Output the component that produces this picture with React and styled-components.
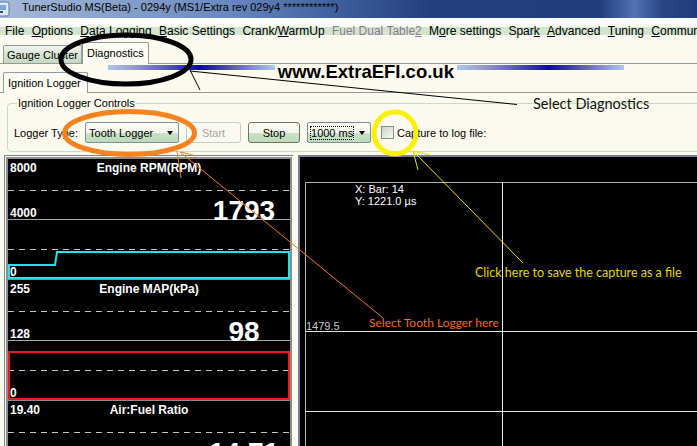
import React from 'react'
import styled, { createGlobalStyle } from 'styled-components'

const GlobalStyle = createGlobalStyle`
  html, body {
    margin: 0;
    padding: 0;
  }
  body {
    width: 697px;
    height: 446px;
    overflow: hidden;
    background: #fcf9ee;
    font-family: "Liberation Sans", Arial, sans-serif;
  }
`

const menus = [
    { label: 'File', key: -1 },
    { label: 'Options', key: 0 },
    { label: 'Data Logging', key: 0 },
    { label: 'Basic Settings', key: 0 },
    { label: 'Crank/WarmUp', key: 6 },
    { label: 'Fuel Dual Table2', key: 15, disabled: true },
    { label: 'More settings', key: 1 },
    { label: 'Spark', key: 4 },
    { label: 'Advanced', key: 0 },
    { label: 'Tuning', key: 0 },
    { label: 'Communications', key: 0 },
]

const gauges = [
    { title: 'Engine RPM(RPM)', max: '8000', mid: '4000', min: '0', value: '1793', trace: 'rpm' },
    { title: 'Engine MAP(kPa)', max: '255', mid: '128', min: '0', value: '98', trace: 'map' },
    { title: 'Air:Fuel Ratio', max: '19.40', mid: '', min: '', value: '14.71', trace: null },
]

const Mnemonic = ({ label, index }) => {
    if (index < 0) return label
    return (
        <>
            {label.slice(0, index)}
            <u>{label[index]}</u>
            {label.slice(index + 1)}
        </>
    )
}

const GaugeChart = ({ trace }) => (
    <GaugeSvg width="282" height="120">
        <line x1="0" y1="31.5" x2="282" y2="31.5" stroke="#c4c4c4" strokeDasharray="6 5" />
        <line x1="0" y1="60.5" x2="282" y2="60.5" stroke="#a8a8a8" />
        <line x1="0" y1="90.5" x2="282" y2="90.5" stroke="#c4c4c4" strokeDasharray="6 5" />
        {trace === 'rpm' && (
            <path d="M1 119 V106 H47 L49 93 H281 V119 Z" fill="none" stroke="#22e2ee" strokeWidth="2" />
        )}
        {trace === 'map' && (
            <rect x="1" y="72" width="280" height="47" fill="none" stroke="#ff1414" strokeWidth="2" />
        )}
    </GaugeSvg>
)

const App = () => {
    return (
        <Page>
            <GlobalStyle />
            <TitleBar>
                <AppIcon width="10" height="16" viewBox="0 0 10 16">
                    <rect x="-6" y="1" width="15" height="14" rx="2" fill="#dce8f6" stroke="#5a78a8" />
                    <rect x="-3" y="4" width="9" height="5" fill="#7fa6d8" />
                    <rect x="-3" y="10" width="6" height="2" fill="#2d4f86" />
                </AppIcon>
                TunerStudio MS(Beta) - 0294y (MS1/Extra rev 029y4 ************)
            </TitleBar>

            <MenuBar>
                {menus.map((m) => (
                    <MenuItem key={m.label} $disabled={m.disabled}>
                        <Mnemonic label={m.label} index={m.key} />
                    </MenuItem>
                ))}
            </MenuBar>

            <TabStrip>
                <Tab>Gauge Cluster</Tab>
                <Tab $active>Diagnostics</Tab>
            </TabStrip>

            <TabBody>
                <HeaderRow>
                    <SubTab>Ignition Logger</SubTab>
                    <Banner>
                        <GradBar />
                        <BannerText>www.ExtraEFI.co.uk</BannerText>
                        <GradBar />
                    </Banner>
                </HeaderRow>

                <SubBody>
                    <GroupBox>
                        <GroupLegend>Ignition Logger Controls</GroupLegend>
                        <ControlRow>
                            <FieldLabel>Logger Type:</FieldLabel>
                            <Combo $w={94}>
                                <ComboText>Tooth Logger</ComboText>
                                <Arrow />
                            </Combo>
                            <Button $w={55} disabled>Start</Button>
                            <Button $w={52}>Stop</Button>
                            <Combo $w={64}>
                                <ComboText $focus>1000 ms</ComboText>
                                <Arrow />
                            </Combo>
                            <CheckBox />
                            <FieldLabel $tight>Capture to log file:</FieldLabel>
                        </ControlRow>
                    </GroupBox>

                    <Main>
                        <LeftFrame>
                            <GaugeStack>
                                {gauges.map((g) => (
                                    <Gauge key={g.title}>
                                        <GaugeChart trace={g.trace} />
                                        <ScaleLabel $top={3}>{g.max}</ScaleLabel>
                                        <GaugeTitle>{g.title}</GaugeTitle>
                                        <ScaleLabel $top={48}>{g.mid}</ScaleLabel>
                                        <ScaleLabel $top={107}>{g.min}</ScaleLabel>
                                        <GaugeValue>{g.value}</GaugeValue>
                                    </Gauge>
                                ))}
                            </GaugeStack>
                        </LeftFrame>

                        <RightFrame>
                            <LoggerSvg width="397" height="300">
                                <line x1="5.5" y1="25.5" x2="400" y2="25.5" stroke="#b4b4b4" />
                                <line x1="5.5" y1="25.5" x2="5.5" y2="300" stroke="#b4b4b4" />
                                <line x1="202.5" y1="25.5" x2="202.5" y2="300" stroke="#ececec" />
                                <line x1="5.5" y1="174.5" x2="400" y2="174.5" stroke="#e4e4e4" />
                                <line x1="5.5" y1="254.5" x2="400" y2="254.5" stroke="#e4e4e4" />
                            </LoggerSvg>
                            <CursorInfo>
                                X: Bar: 14<br />
                                Y: 1221.0 µs
                            </CursorInfo>
                            <AxisLabel>1479.5</AxisLabel>
                        </RightFrame>
                    </Main>
                </SubBody>
            </TabBody>

            <Overlay width="697" height="446" viewBox="0 0 697 446">
                <ellipse cx="126" cy="59.5" rx="65" ry="24.5" fill="none" stroke="#000" strokeWidth="5" />
                <line x1="190" y1="71" x2="517" y2="104.5" stroke="#000" strokeWidth="1" />
                <line x1="190" y1="70" x2="200" y2="90" stroke="#000" strokeWidth="1" />

                <ellipse cx="129.5" cy="133" rx="65" ry="21.5" fill="none" stroke="#f7831f" strokeWidth="5" />
                <line x1="180" y1="152" x2="383" y2="318" stroke="#f47b20" strokeWidth="1" />
                <line x1="177" y1="151" x2="181" y2="178" stroke="#f47b20" strokeWidth="1" />
                <line x1="181" y1="152" x2="196" y2="156" stroke="#f47b20" strokeWidth="1" />

                <ellipse cx="395" cy="133" rx="21" ry="21" fill="none" stroke="#fbf100" strokeWidth="5" />
                <line x1="413" y1="151" x2="523" y2="263" stroke="#e8e000" strokeWidth="1" />
                <line x1="413" y1="151" x2="418" y2="170" stroke="#e8e000" strokeWidth="1" />
                <line x1="414" y1="151" x2="430" y2="155" stroke="#e8e000" strokeWidth="1" />
            </Overlay>
            <Note $x={533} $y={95} $size={14.5} $color="#111">Select Diagnostics</Note>
            <Note $x={369} $y={316} $size={12} $color="#f26a1b">Select Tooth Logger here</Note>
            <Note $x={475} $y={265} $size={12.5} $color="#e2d800">Click here to save the capture as a file</Note>
        </Page>
    )
}

const Page = styled.div`
    position: relative;
    width: 697px;
    height: 446px;
    overflow: hidden;
    display: flex;
    flex-direction: column;
`

const TitleBar = styled.div`
    height: 18px;
    flex: none;
    box-sizing: border-box;
    display: flex;
    align-items: flex-start;
    padding-top: 1px;
    font-size: 11px;
    line-height: 13px;
    color: #000;
    white-space: nowrap;
    background: linear-gradient(90deg, #a6bad8 0%, #89a3cb 15%, #6a8ac0 32%, #3c5a98 50%, #243f7e 62%, #213d7c 86%, #5272b2 91%, #2a4685 95%, #203c7b 100%);
`

const AppIcon = styled.svg`
    flex: none;
    margin: 0 12px 0 0;
`

const MenuBar = styled.div`
    height: 22px;
    flex: none;
    box-sizing: border-box;
    display: flex;
    gap: 7.3px;
    padding: 6px 0 0 5px;
    font-size: 12px;
    line-height: 14px;
    white-space: nowrap;
    background: linear-gradient(180deg, #fdfdf8 0px, #fdfdf8 9px, #d3e5cf 9px, #d3e5cf 17px, #fcfbf3 17px);
`

const MenuItem = styled.span`
    color: ${(p) => (p.$disabled ? '#8c7b8e' : '#000')};
    u {
        text-decoration-thickness: 1px;
    }
`

const TabStrip = styled.div`
    height: 23px;
    flex: none;
    display: flex;
    align-items: flex-end;
    padding-left: 3px;
    position: relative;
    z-index: 1;
`

const Tab = styled.div`
    box-sizing: border-box;
    height: ${(p) => (p.$active ? 22 : 18)}px;
    margin-bottom: ${(p) => (p.$active ? -1 : 0)}px;
    padding: ${(p) => (p.$active ? '4px 4px 0' : '3px 3px 0')};
    border: 1px solid #919b9c;
    border-bottom: ${(p) => (p.$active ? 'none' : '0')};
    border-radius: 2px 2px 0 0;
    background: ${(p) => (p.$active ? '#fcfcf4' : 'linear-gradient(180deg, #eef3ea 0%, #d6e3d0 60%, #c6d7c0 100%)')};
    font-size: 11px;
    line-height: 13px;
    white-space: nowrap;
`

const TabBody = styled.div`
    flex: 1;
    border-top: 1px solid #919b9c;
    display: flex;
    flex-direction: column;
`

const HeaderRow = styled.div`
    height: 28px;
    flex: none;
    display: flex;
    align-items: flex-start;
    padding-left: 3px;
    position: relative;
    z-index: 1;
`

const SubTab = styled.div`
    align-self: flex-end;
    box-sizing: border-box;
    height: 21px;
    margin-bottom: -1px;
    padding: 4px 6px 0 4px;
    border: 1px solid #919b9c;
    border-bottom: none;
    border-radius: 2px 2px 0 0;
    background: #fcfcf4;
    font-size: 11px;
    line-height: 13px;
    white-space: nowrap;
`

const Banner = styled.div`
    display: flex;
    align-items: flex-start;
    margin-left: 20px;
`

const GradBar = styled.div`
    width: 167px;
    height: 5px;
    margin-top: 1px;
    background: linear-gradient(90deg, #a9c9ef 0%, #9a9ccb 15%, #6a6cc4 30%, #2424bc 48%, #0808b4 55%, #3c3cbc 68%, #7878c6 82%, #a9c9ef 100%);
`

const BannerText = styled.div`
    margin: 1px 3px 0;
    font-size: 18.5px;
    line-height: 14px;
    font-weight: 700;
    color: #000;
    white-space: nowrap;
`

const SubBody = styled.div`
    flex: 1;
    border-top: 1px solid #919b9c;
    display: flex;
    flex-direction: column;
`

const GroupBox = styled.fieldset`
    margin: 4px -30px 0 7px;
    padding: 12px 7px 8px 6px;
    border: 1px solid #c6dbc6;
    border-radius: 4px;
    min-inline-size: 0;
`

const GroupLegend = styled.legend`
    padding: 0 1px;
    margin-left: 3px;
    font-size: 11px;
    line-height: 13px;
    color: #000;
`

const ControlRow = styled.div`
    display: flex;
    align-items: center;
    gap: 7px;
    height: 21px;
    font-size: 11px;
`

const FieldLabel = styled.span`
    white-space: nowrap;
    margin-left: ${(p) => (p.$tight ? -4 : 0)}px;
    margin-right: ${(p) => (p.$tight ? 0 : 0)}px;
`

const Combo = styled.div`
    width: ${(p) => p.$w}px;
    height: 21px;
    box-sizing: border-box;
    display: flex;
    align-items: center;
    justify-content: space-between;
    padding: 0 5px 0 2px;
    border: 1px solid #7f8e9f;
    border-radius: 2px;
    background: linear-gradient(180deg, #fcfcf5 0%, #f5f7ee 50%, #c6e0c3 56%, #bcdbba 100%);
`

const ComboText = styled.span`
    padding: 1px 1px;
    white-space: nowrap;
    outline: ${(p) => (p.$focus ? '1px dotted #000' : 'none')};
    outline-offset: -1px;
`

const Arrow = styled.span`
    width: 0;
    height: 0;
    border-left: 3.5px solid transparent;
    border-right: 3.5px solid transparent;
    border-top: 4px solid #000;
    margin-top: 1px;
`

const Button = styled.button`
    width: ${(p) => p.$w}px;
    height: 21px;
    box-sizing: border-box;
    padding: 0;
    font-family: inherit;
    font-size: 11px;
    color: #000;
    border: 1px solid #707070;
    border-radius: 3px;
    background: linear-gradient(180deg, #fcfcf5 0%, #f4f6ec 50%, #c6e0c3 56%, #bddbbb 100%);
    &:disabled {
        color: #a8a8a8;
        border-color: #c3cec3;
        background: #fbfaf2;
    }
`

const CheckBox = styled.span`
    width: 13px;
    height: 13px;
    box-sizing: border-box;
    margin-left: 3px;
    border: 1px solid #8a8f8a;
    background: linear-gradient(135deg, #c9d3c9 0%, #e2e8e0 55%, #f6f7f2 100%);
`

const Main = styled.div`
    flex: 1;
    display: flex;
    gap: 5px;
    margin-top: 3px;
    padding-left: 4px;
    min-height: 0;
`

const LeftFrame = styled.div`
    flex: none;
    padding: 1px 1px 0 1px;
    border-left: 1px solid #7c7c9c;
    border-top: 1px solid #7c7c9c;
    background: #fcf9ee;
`

const GaugeStack = styled.div`
    width: 282px;
    height: 100%;
    border: 2px solid #8c8c8c;
    border-bottom: none;
    background: #000;
    display: flex;
    flex-direction: column;
    overflow: hidden;
`

const Gauge = styled.div`
    position: relative;
    flex: none;
    height: 121px;
    box-sizing: border-box;
    border-bottom: 1px solid #8a8a8a;
    color: #fff;
    font-weight: 700;
`

const GaugeSvg = styled.svg`
    display: block;
`

const ScaleLabel = styled.span`
    position: absolute;
    left: 2px;
    top: ${(p) => p.$top}px;
    font-size: 12px;
    line-height: 12px;
`

const GaugeTitle = styled.span`
    position: absolute;
    left: 0;
    right: 0;
    top: 3px;
    text-align: center;
    font-size: 12px;
    line-height: 12px;
`

const GaugeValue = styled.span`
    position: absolute;
    left: 186px;
    width: 100px;
    top: 38px;
    text-align: center;
    font-size: 28px;
    line-height: 28px;
`

const RightFrame = styled.div`
    position: relative;
    flex: 1;
    border-left: 2px solid #7a7a98;
    border-top: 2px solid #7a7a98;
    background: #000;
    overflow: hidden;
`

const LoggerSvg = styled.svg`
    display: block;
`

const CursorInfo = styled.div`
    position: absolute;
    left: 55px;
    top: 27px;
    font-size: 11px;
    line-height: 11.5px;
    color: #fff;
`

const AxisLabel = styled.span`
    position: absolute;
    left: 6px;
    top: 163px;
    font-size: 11px;
    line-height: 12px;
    color: #c8c8c8;
`

const Overlay = styled.svg`
    position: absolute;
    left: 0;
    top: 0;
    pointer-events: none;
    z-index: 5;
`

const Note = styled.span`
    position: absolute;
    left: ${(p) => p.$x}px;
    top: ${(p) => p.$y}px;
    z-index: 6;
    font-family: Lato, "Open Sans", sans-serif;
    font-size: ${(p) => p.$size}px;
    line-height: ${(p) => Math.round(p.$size + 2)}px;
    color: ${(p) => p.$color};
    white-space: nowrap;
`

export default App
